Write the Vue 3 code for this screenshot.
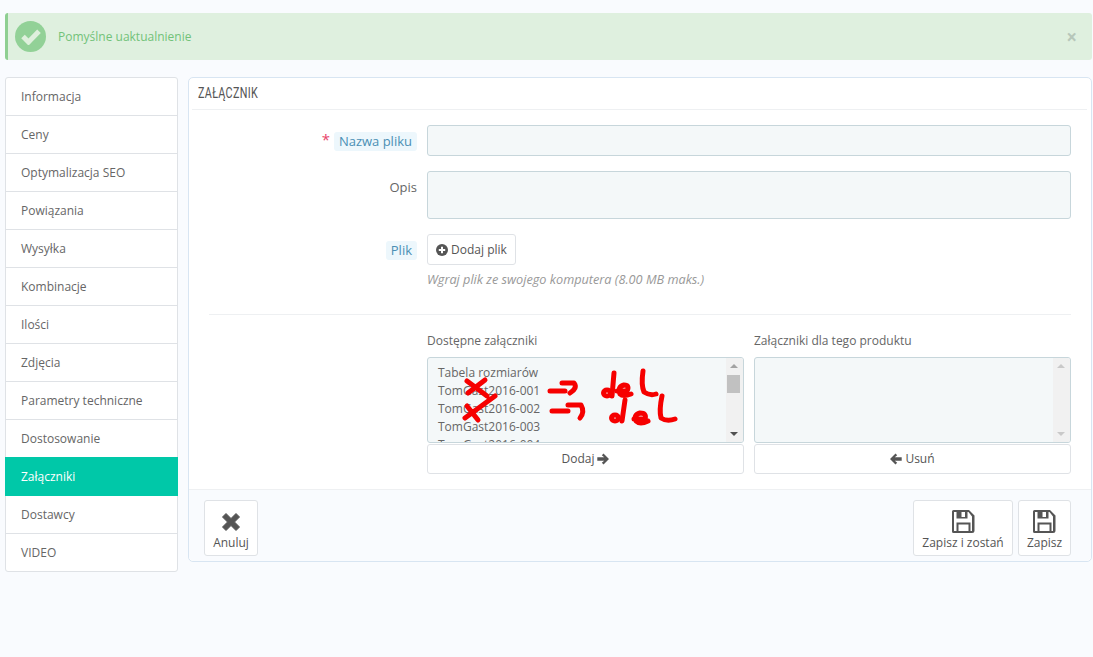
<script setup>
const tabs = ['Informacja','Ceny','Optymalizacja SEO','Powiązania','Wysyłka','Kombinacje','Ilości','Zdjęcia','Parametry techniczne','Dostosowanie','Załączniki','Dostawcy','VIDEO']
const files = ['Tabela rozmiarów','TomGast2016-001','TomGast2016-002','TomGast2016-003','TomGast2016-004']
</script>

<template>
  <div class="page">
    <div class="alert">
      <span class="alert-icon">
        <svg width="22" height="17" viewBox="0 0 22 17"><path d="M3 8.500 8.500 14 19 3.200" fill="none" stroke="#dff0dd" stroke-width="5"/></svg>
      </span>
      <span class="alert-text">Pomyślne uaktualnienie</span>
      <span class="alert-close">×</span>
    </div>

    <div class="main">
      <nav class="tabs">
        <a v-for="t in tabs" :key="t" class="tab" :class="{ active: t === 'Załączniki' }">{{ t }}</a>
      </nav>

      <section class="panel">
        <h3 class="heading"><span>ZAŁĄCZNIK</span></h3>

        <div class="form">
          <div class="row row-name">
            <label class="label"><span class="req">*</span><span class="hint">Nazwa pliku</span></label>
            <div class="field"><div class="input"></div></div>
          </div>
          <div class="row row-desc">
            <label class="label label-plain">Opis</label>
            <div class="field"><div class="input textarea"></div></div>
          </div>
          <div class="row row-file">
            <label class="label"><span class="hint">Plik</span></label>
            <div class="field">
              <button class="btn btn-add">
                <svg width="12" height="12" viewBox="0 0 12 12"><circle cx="6" cy="6" r="6" fill="#555"/><path d="M6 2.800v6.400M2.800 6h6.400" stroke="#fff" stroke-width="2"/></svg>
                Dodaj plik
              </button>
              <p class="help">Wgraj plik ze swojego komputera (8.00 MB maks.)</p>
            </div>
          </div>

          <hr class="divider" />

          <div class="pick">
            <div class="pick-col">
              <div class="pick-title">Dostępne załączniki</div>
              <div class="listbox">
                <ul class="options"><li v-for="f in files" :key="f">{{ f }}</li></ul>
                <div class="scrollbar">
                  <i class="arrow up dark"></i>
                  <i class="thumb"></i>
                  <i class="arrow down darker"></i>
                </div>
                <svg class="scribble" width="240" height="70" viewBox="455 368 240 70">
                  <g fill="none" stroke="#f60000" stroke-width="5" stroke-linecap="round" stroke-linejoin="round">
                    <path d="M467 381 487 396M485 380 468 393M495 396 465 418M467 406 478 420"/>
                    <path d="M550 391H565M562 383H574Q578 388 570 393"/>
                    <path d="M552 411H568M568 405H581Q585 412 580 418"/>
                    <path d="M614 373 612 396"/>
                    <ellipse cx="607" cy="393" rx="3.500" ry="3" />
                    <path d="M617 391H627Q630 385 624 385 617 387 620 394 623 397 631 394"/>
                    <path d="M643 371Q641 385 644 392 650 396 656 394"/>
                    <path d="M625 400 622 421"/>
                    <ellipse cx="615" cy="418" rx="3.500" ry="3" />
                    <path d="M634 419H645Q647 413 640 413 633 415 636 421 640 425 648 421"/>
                    <path d="M662 396Q659 410 661 418 667 422 675 419"/>
                  </g>
                </svg>
              </div>
              <button class="btn btn-wide">Dodaj
                <svg width="12" height="12" viewBox="0 0 12 12"><path d="M6.500 .5 12 6 6.500 11.500 4.800 9.800 7.200 7.700H.3V4.300H7.200L4.800 2.200Z" fill="#555"/></svg>
              </button>
            </div>
            <div class="pick-col">
              <div class="pick-title">Załączniki dla tego produktu</div>
              <div class="listbox">
                <ul class="options"></ul>
                <div class="scrollbar">
                  <i class="arrow up"></i>
                  <i class="arrow down"></i>
                </div>
              </div>
              <button class="btn btn-wide">
                <svg width="12" height="12" viewBox="0 0 12 12"><path d="M5.500 .5 0 6 5.500 11.500 7.200 9.800 4.800 7.700H11.700V4.300H4.800L7.200 2.200Z" fill="#555"/></svg>
                Usuń
              </button>
            </div>
          </div>
        </div>

        <footer class="footer">
          <button class="btn btn-tool btn-cancel">
            <svg class="x-icon" width="20" height="20" viewBox="0 0 20 20"><path d="M5 1.500 10 6.500 15 1.500 18.500 5 13.500 10 18.500 15 15 18.500 10 13.500 5 18.500 1.500 15 6.500 10 1.500 5Z" fill="#555" stroke="#555" stroke-linejoin="round"/></svg>
            <span>Anuluj</span>
          </button>
          <div class="spacer"></div>
          <button class="btn btn-tool btn-stay">
            <svg width="25" height="25" viewBox="0 0 25 25"><path fill="#555" fill-rule="evenodd" d="M2.500 1H18l5.500 5.500V21.500A2.500 2.500 0 0 1 21 24H2.500A1.500 1.500 0 0 1 1 22.500V2.500A1.500 1.500 0 0 1 2.500 1ZM3 3V22H5.500V13.500H19.500V22H21V7.500L17.500 3H16.500V9.500H5.500V3ZM7.500 15.500V22H17.500V15.500ZM10.500 3V8H14V3Z"/></svg>
            <span>Zapisz i zostań</span>
          </button>
          <button class="btn btn-tool btn-save">
            <svg width="25" height="25" viewBox="0 0 25 25"><path fill="#555" fill-rule="evenodd" d="M2.500 1H18l5.500 5.500V21.500A2.500 2.500 0 0 1 21 24H2.500A1.500 1.500 0 0 1 1 22.500V2.500A1.500 1.500 0 0 1 2.500 1ZM3 3V22H5.500V13.500H19.500V22H21V7.500L17.500 3H16.500V9.500H5.500V3ZM7.500 15.500V22H17.500V15.500ZM10.500 3V8H14V3Z"/></svg>
            <span>Zapisz</span>
          </button>
        </footer>
      </section>
    </div>
  </div>
</template>

<style>
html, body { margin: 0; background: #f8fbff; }
</style>

<style scoped>
* { box-sizing: border-box; }
.page {
  height: 657px; overflow: hidden; padding: 13px 1px 0 5px;
  background: #f9fbfe; color: #666;
  font: 12px/18px "Open Sans", sans-serif;
}
.alert {
  height: 47px; display: flex; align-items: center; padding: 0 15px 0 7px;
  background: #dff0df; border-left: 3px solid #8fcf92; border-radius: 3px; color: #72c279;
  margin-bottom: 17px;
}
.alert-icon {
  width: 31px; height: 31px; border-radius: 50%; background: #92d197;
  display: flex; align-items: center; justify-content: center; margin-right: 12px;
}
.alert-text { flex: 1; }
.alert-close { color: #b7c7ba; font-size: 19px; font-weight: 700; }
.main { display: flex; align-items: flex-start; gap: 10px; }
.tabs {
  width: 173px; flex: none; display: flex; flex-direction: column;
  background: #fff; border: 1px solid #dfe2e6; border-radius: 3px;
}
.tab {
  height: 38px; padding: 10px 15px 0; border-bottom: 1px solid #dfe2e6; color: #666;
}
.tab:last-child { height: 37px; border-bottom: 0; }
.tab.active { background: #00c8a8; color: #fff; margin: -1px -1px 0; padding: 11px 16px 0; height: 39px; border-bottom: 0; }
.panel {
  flex: 1; height: 485px; background: #fff; display: flex; flex-direction: column;
  border: 1px solid #d8e5f2; border-radius: 5px;
}
.heading {
  margin: 0 4px 0 3px; height: 32px; padding: 6px 6px 0; border-bottom: 1px solid #eef0f2;
  font: 400 14px/18px "Roboto", sans-serif; color: #555;
}
.heading span { display: inline-block; transform: scaleX(.77); transform-origin: left; letter-spacing: .4px; }
.form { flex: 1; padding: 15px 20px 0 20px; }
.row { display: flex; }
.label {
  width: 218px; flex: none; padding-right: 10px; text-align: right; font-size: 13px;
  display: flex; justify-content: flex-end; align-items: flex-start; gap: 3px;
}
.label-plain { display: block; padding-top: 7px; }
.hint {
  background: #edf7fc; color: #4a8fb4; padding: 0 5px; border-radius: 3px; line-height: 19px; height: 19px; margin-top: 7px;
}
.req { color: #e8436a; font-size: 15px; margin-top: 5px; margin-right: 1px; }
.field { flex: 1; }
.input { height: 31px; background: #f4f8f9; border: 1px solid #c7d6db; border-radius: 3px; }
.textarea { height: 48px; }
.row-name { margin-bottom: 15px; }
.row-desc { margin-bottom: 15px; }
.btn {
  background: #fff; border: 1px solid #dfe2e6; border-radius: 3px; color: #555;
  font: 12px/18px "Open Sans", sans-serif; padding: 0;
}
.btn-add { height: 31px; width: 89px; display: inline-flex; align-items: center; justify-content: center; gap: 3px; }
.help { margin: 5px 0 0; color: #999; font-style: italic; line-height: 18px; font-size: 12.700px; }
.divider { border: 0; border-top: 1px solid #eef0f2; margin: 26px 0 17px; }
.pick { display: flex; gap: 10px; padding-left: 218px; }
.pick-col { flex: 1; min-width: 0; }
.pick-title { height: 18px; margin-bottom: 7px; color: #666; }
.listbox {
  position: relative; height: 86px; margin-bottom: 1px; overflow: hidden; background: #f4f8f9;
  border: 1px solid #c7d6db; border-radius: 3px;
}
.options { list-style: none; margin: 0; padding: 6px 10px; color: #666; }
.scrollbar {
  position: absolute; right: 0; top: 0; bottom: 0; width: 17px; background: #f1f1f1;
}
.arrow { position: absolute; left: 4px; width: 0; height: 0; border-left: 4px solid transparent; border-right: 4px solid transparent; }
.arrow.up { top: 6px; border-bottom: 4px solid #c9c9c9; }
.arrow.down { bottom: 6px; border-top: 4px solid #c9c9c9; }
.arrow.up.dark { border-bottom-color: #a3a3a3; }
.arrow.down.darker { border-top-color: #505050; }
.thumb { position: absolute; left: 1px; top: 17px; width: 13px; height: 18px; background: #c1c1c1; }
.scribble { position: absolute; left: 27px; top: 10px; pointer-events: none; }
.btn-wide { display: flex; align-items: center; justify-content: center; gap: 3px; width: 100%; height: 30px; }
.footer {
  flex: none; height: 72px; display: flex; align-items: flex-start; gap: 5px; padding: 10px 20px 0 15px;
  background: #f9fbfe; border-top: 1px solid #eef0f2; border-radius: 0 0 5px 5px;
}
.spacer { flex: 1; }
.btn-tool {
  height: 56px; padding: 8px 0 0; display: flex; flex-direction: column; align-items: center;
  line-height: 16px; background: #fff;
}
.btn-tool svg { display: block; height: 25px; margin-bottom: 1px; }
.btn-tool .x-icon { height: 20px; margin: 3px 0; }
.btn-cancel { width: 54px; }
.btn-stay { width: 100px; }
.btn-save { width: 53px; }
</style>
